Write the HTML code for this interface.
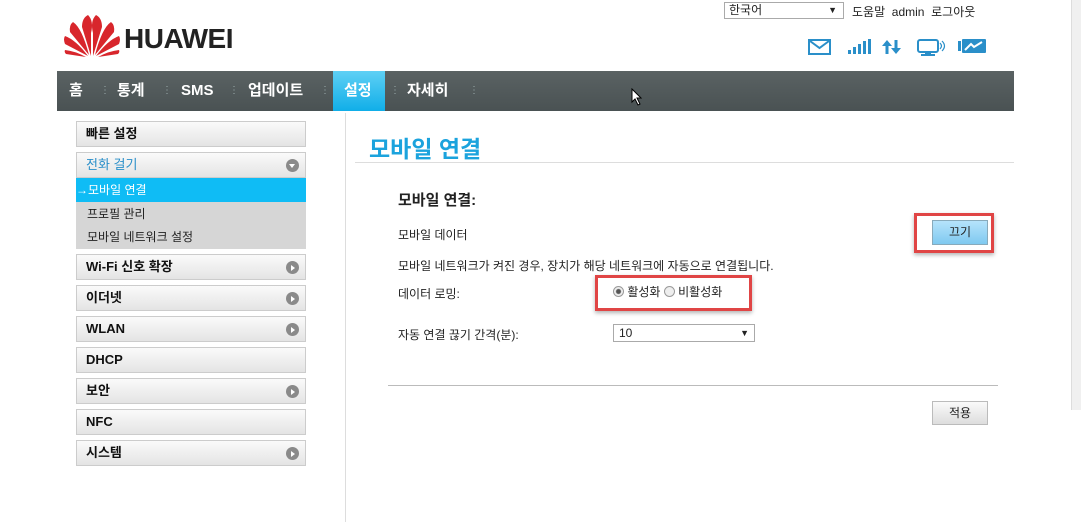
<!DOCTYPE html>
<html><head><meta charset="utf-8"><style>
*{margin:0;padding:0;box-sizing:border-box}
body{width:1081px;height:522px;overflow:hidden;background:#fff;font-family:"Liberation Sans","Noto Sans CJK KR",sans-serif;font-size:12px;color:#222;position:relative}
.a{position:absolute}
.nav{left:57px;top:71px;width:957px;height:40px;background:linear-gradient(#5a6263,#4a5253)}
.nav span{position:absolute;top:0;height:40px;line-height:40px;color:#fff;font-weight:bold;font-size:15px}
.sep{color:#9aa!important;font-size:10px!important;font-weight:normal!important}
.btn{position:absolute;left:76px;width:230px;height:26px;border:1px solid #ccc;background:linear-gradient(#fafafa,#e4e4e4);font-weight:bold;font-size:13px;line-height:24px;padding-left:9px;color:#111}
.arr{position:absolute;right:6px;top:6px;width:13px;height:13px;border-radius:50%;background:#8a8a8a}
.arr:after{content:"";position:absolute;left:5px;top:3.5px;border-left:4px solid #fff;border-top:3px solid transparent;border-bottom:3px solid transparent}
.dn:after{left:3px;top:5px;border-top:4px solid #fff;border-left:3px solid transparent;border-right:3px solid transparent;border-bottom:0}
.sub{position:absolute;left:76px;width:230px;height:24px;line-height:24px;font-size:12px;padding-left:11px}
.red{position:absolute;border:3px solid #e04545;box-shadow:0 2px 4px rgba(0,0,0,.3)}
</style></head><body>
<svg class="a" style="left:63px;top:13px" width="58" height="44" viewBox="0 0 58 44">
<g fill="#d8262c"><path d="M28 43 L19 14 Q19 5 25 2 Q31 8 28 20Z"/><path d="M30 43 L39 14 Q39 5 33 2 Q27 8 30 20Z"/><path d="M26 42 L7 19 Q6 12 10 9 Q19 15 26 42Z"/><path d="M32 42 L51 19 Q52 12 48 9 Q39 15 32 42Z"/><path d="M25 43 L2 31 Q0 26 2 23 Q13 27 25 43Z"/><path d="M33 43 L56 31 Q58 26 56 23 Q45 27 33 43Z"/><path d="M23 44 L3 41 Q1 39 2 37 Q12 38 23 44Z"/><path d="M35 44 L55 41 Q57 39 56 37 Q46 38 35 44Z"/></g></svg>
<div class="a" style="left:124px;top:23px;font-size:28px;font-weight:bold;color:#222;letter-spacing:-0.5px">HUAWEI</div>
<div class="a" style="left:724px;top:2px;width:120px;height:17px;border:1px solid #aaa;font-size:12px;line-height:15px;padding-left:4px">한국어<span style="position:absolute;right:6px;font-size:9px">▼</span></div>
<div class="a" style="left:852px;top:3px;font-size:12px">도움말&nbsp;&nbsp;admin&nbsp;&nbsp;로그아웃</div>
<svg class="a" style="left:808px;top:36px" width="180" height="22" viewBox="0 0 180 20" fill="#2a8fc9">
<rect x="1" y="3" width="21" height="14" fill="none" stroke="#2a8fc9" stroke-width="2"/><path d="M2 4 L11.5 11 L21 4" fill="none" stroke="#2a8fc9" stroke-width="2"/>
<rect x="40" y="13" width="3" height="4"/><rect x="45" y="10" width="3" height="7"/><rect x="50" y="7" width="3" height="10"/><rect x="55" y="4" width="3" height="13"/><rect x="60" y="2" width="3" height="15"/>
<path d="M79 3 L74 9 H77.5 V17 H80.5 V9 H84Z M88 17 L83 11 H86.5 V3 H89.5 V11 H93Z"/>
<rect x="110" y="3" width="20" height="12" rx="2" fill="none" stroke="#2a8fc9" stroke-width="2"/><rect x="117" y="15" width="6" height="2"/><rect x="113" y="17" width="14" height="2"/><path d="M132 6 Q135 9 132 12 M134 4 Q139 9 134 14" fill="none" stroke="#2a8fc9" stroke-width="1.2"/>
<rect x="150" y="4" width="3" height="10"/><rect x="154" y="2" width="24" height="14" rx="1"/><path d="M157 13 L163 7 L166 10 L174 5" stroke="#fff" stroke-width="2" fill="none"/>
</svg>
<div class="a nav">
<span style="left:12px">홈</span><span class="sep" style="left:43px">⋮</span>
<span style="left:60px">통계</span><span class="sep" style="left:105px">⋮</span>
<span style="left:124px">SMS</span><span class="sep" style="left:172px">⋮</span>
<span style="left:191px">업데이트</span><span class="sep" style="left:263px">⋮</span>
<span style="left:276px;width:52px;background:linear-gradient(#5fd0f5,#10aee8);padding-left:11px">설정</span><span class="sep" style="left:333px">⋮</span>
<span style="left:350px">자세히</span><span class="sep" style="left:412px">⋮</span>
</div>
<svg class="a" style="left:631px;top:88px" width="12" height="18"><path d="M1 1 V14 L4 11 L7 17 L9 16 L6 10 H10Z" fill="#fff" stroke="#000"/></svg>
<div class="btn" style="top:121px">빠른 설정</div>
<div class="btn" style="top:152px;color:#2a8fc9;font-weight:normal;font-size:13px">전화 걸기<div class="arr dn"></div></div>
<div class="a" style="left:76px;top:178px;width:230px;height:71px;background:#d6d6d6"></div>
<div class="sub" style="top:178px;background:#0fbcf5;color:#fff;padding-left:0">→모바일 연결</div>
<div class="sub" style="top:202px">프로필 관리</div>
<div class="sub" style="top:225px">모바일 네트워크 설정</div>
<div class="btn" style="top:254px">Wi-Fi 신호 확장<div class="arr"></div></div>
<div class="btn" style="top:285px">이더넷<div class="arr"></div></div>
<div class="btn" style="top:316px">WLAN<div class="arr"></div></div>
<div class="btn" style="top:347px">DHCP</div>
<div class="btn" style="top:378px">보안<div class="arr"></div></div>
<div class="btn" style="top:409px">NFC</div>
<div class="btn" style="top:440px">시스템<div class="arr"></div></div>
<div class="a" style="left:345px;top:113px;width:1px;height:409px;background:#ddd"></div>
<div class="a" style="left:369px;top:130px;font-size:23px;font-weight:bold;color:#1ba3dd">모바일 연결</div>
<div class="a" style="left:355px;top:162px;width:659px;height:1px;background:#ddd"></div>
<div class="a" style="left:398px;top:189px;font-size:15px;font-weight:bold">모바일 연결:</div>
<div class="a" style="left:398px;top:226px">모바일 데이터</div>
<div class="red" style="left:914px;top:213px;width:80px;height:40px"></div>
<div class="a" style="left:932px;top:220px;width:56px;height:25px;background:linear-gradient(#b5e3fb,#7fc9f0);border:1px solid #8ab;text-align:center;line-height:23px;font-size:12px">끄기</div>
<div class="a" style="left:398px;top:257px">모바일 네트워크가 켜진 경우, 장치가 해당 네트워크에 자동으로 연결됩니다.</div>
<div class="a" style="left:398px;top:285px">데이터 로밍:</div>
<div class="red" style="left:595px;top:275px;width:157px;height:36px"></div>
<div class="a" style="left:613px;top:283px;font-size:12px"><span style="display:inline-block;width:11px;height:11px;border:1px solid #999;border-radius:50%;background:radial-gradient(#555 0 2px,#eee 3px);vertical-align:-1px"></span> 활성화 <span style="display:inline-block;width:11px;height:11px;border:1px solid #999;border-radius:50%;background:#eee;vertical-align:-1px"></span> 비활성화</div>
<div class="a" style="left:398px;top:326px">자동 연결 끊기 간격(분):</div>
<div class="a" style="left:613px;top:324px;width:142px;height:18px;border:1px solid #aaa;padding-left:5px;line-height:16px">10<span style="position:absolute;right:5px;font-size:9px">▼</span></div>
<div class="a" style="left:388px;top:385px;width:610px;height:1px;background:#bbb"></div>
<div class="a" style="left:932px;top:401px;width:56px;height:24px;border:1px solid #bbb;background:linear-gradient(#fafafa,#ddd);text-align:center;line-height:22px">적용</div>
<div class="a" style="left:1071px;top:0;width:10px;height:410px;background:#f0f0f0;border-left:1px solid #ddd"></div>
</body></html>
